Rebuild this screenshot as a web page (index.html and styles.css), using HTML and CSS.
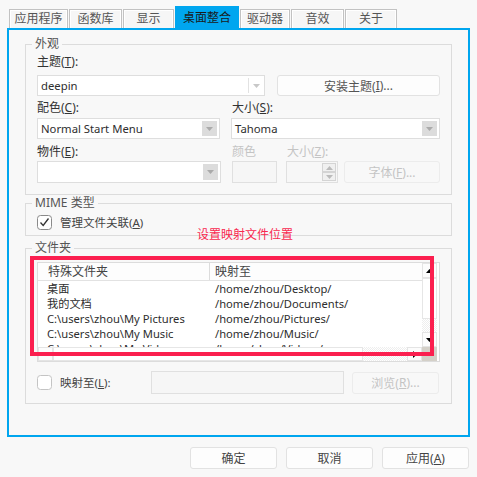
FILE: index.html
```
<!DOCTYPE html>
<html lang="zh">
<head>
<meta charset="utf-8">
<link rel="stylesheet" href="styles.css">
</head>
<body>
<div class="tabs">
  <div class="tab">应用程序</div>
  <div class="tab">函数库</div>
  <div class="tab">显示</div>
  <div class="tab active">桌面整合</div>
  <div class="tab">驱动器</div>
  <div class="tab">音效</div>
  <div class="tab">关于</div>
</div>
<div class="frame">
  <fieldset class="group g-look">
    <legend>外观</legend>
    <div class="lab l1">主题(<u>T</u>):</div>
    <div class="row r1">
      <div class="combo w-theme"><span class="val">deepin</span><span class="arrow plain"><svg width="7" height="4" viewBox="0 0 7 4"><polygon points="0,0 7,0 3.5,4" fill="#c8c8c8"/></svg></span></div>
      <div class="btn w-install">安装主题(<u>I</u>)...</div>
    </div>
    <div class="row labs l2">
      <div class="lab c-left">配色(<u>C</u>):</div>
      <div class="lab">大小(<u>S</u>):</div>
    </div>
    <div class="row r2">
      <div class="combo w-left"><span class="val">Normal Start Menu</span><span class="arrow box"><svg width="7" height="4" viewBox="0 0 7 4"><polygon points="0,0 7,0 3.5,4" fill="#aaa"/></svg></span></div>
      <div class="combo w-size ml11"><span class="val">Tahoma</span><span class="arrow box"><svg width="7" height="4" viewBox="0 0 7 4"><polygon points="0,0 7,0 3.5,4" fill="#aaa"/></svg></span></div>
    </div>
    <div class="row labs l3">
      <div class="lab c-left">物件(<u>E</u>):</div>
      <div class="lab dis c-color">颜色</div>
      <div class="lab dis">大小(<u>Z</u>):</div>
    </div>
    <div class="row r3">
      <div class="combo w-left tall"><span class="val"></span><span class="arrow box"><svg width="7" height="4" viewBox="0 0 7 4"><polygon points="0,0 7,0 3.5,4" fill="#aaa"/></svg></span></div>
      <div class="field w-color ml11"></div>
      <div class="spin ml9">
        <div class="spin-btns">
          <span class="sb"><svg width="7" height="4" viewBox="0 0 7 4"><polygon points="0,4 7,4 3.5,0" fill="#bbb"/></svg></span>
          <span class="sb"><svg width="7" height="4" viewBox="0 0 7 4"><polygon points="0,0 7,0 3.5,4" fill="#bbb"/></svg></span>
        </div>
      </div>
      <div class="btn dis w-font ml6">字体(<u>F</u>)...</div>
    </div>
  </fieldset>

  <fieldset class="group g-mime">
    <legend>MIME 类型</legend>
    <div class="row chk-row">
      <span class="chk"><svg width="15" height="15" viewBox="0 0 15 15"><rect x="0.5" y="0.5" width="14" height="14" rx="3" fill="#fff" stroke="#8a8a8a"/><polyline points="3.5,7.5 6.2,10.5 11.5,3.5" fill="none" stroke="#333" stroke-width="1.3"/></svg></span>
      <span class="chk-label">管理文件关联(<u>A</u>)</span>
    </div>
  </fieldset>

  <fieldset class="group g-folder">
    <legend>文件夹</legend>
    <div class="listwrap">
      <div class="list">
        <div class="lhead">
          <div class="hc c1">特殊文件夹</div>
          <div class="hc c2">映射至</div>
        </div>
        <div class="lbody">
          <div class="lrow"><span class="c1">桌面</span><span class="c2">/home/zhou/Desktop/</span></div>
          <div class="lrow"><span class="c1">我的文档</span><span class="c2">/home/zhou/Documents/</span></div>
          <div class="lrow"><span class="c1">C:\users\zhou\My Pictures</span><span class="c2">/home/zhou/Pictures/</span></div>
          <div class="lrow"><span class="c1">C:\users\zhou\My Music</span><span class="c2">/home/zhou/Music/</span></div>
          <div class="lrow"><span class="c1">C:\users\zhou\My Videos</span><span class="c2">/home/zhou/Videos/</span></div>
        </div>
        <div class="vscroll">
          <span class="sbtn"><svg width="7" height="4" viewBox="0 0 7 4"><polygon points="0,4 7,4 3.5,0" fill="#000"/></svg></span>
          <span class="vthumb"></span>
          <span class="vtrack"></span>
          <span class="sbtn"><svg width="7" height="4" viewBox="0 0 7 4"><polygon points="0,0 7,0 3.5,4" fill="#000"/></svg></span>
        </div>
        <div class="hscroll">
          <span class="sbtn h"><svg width="4" height="4" viewBox="0 0 4 4"><polygon points="0,4 4,4 4,0" fill="#000"/></svg></span>
          <span class="hthumb"></span>
          <span class="htrack"></span>
          <span class="sbtn h"><svg width="4" height="7" viewBox="0 0 4 7"><polygon points="0,0 4,3.5 0,7" fill="#000"/></svg></span>
        </div>
        <div class="corner"></div>
      </div>
      <div class="note-text">设置映射文件位置</div>
      <div class="note-box"></div>
    </div>
    <div class="row map-row">
      <div class="map-left">
        <span class="chk"><svg width="15" height="15" viewBox="0 0 15 15"><rect x="0.5" y="0.5" width="14" height="14" rx="3" fill="#fff" stroke="#c4c4c4"/></svg></span>
        <span class="chk-label">映射至(<u>L</u>):</span>
      </div>
      <div class="field w-map"></div>
      <div class="btn dis w-browse">浏览(<u>R</u>)...</div>
    </div>
  </fieldset>
</div>
<div class="actions">
  <div class="btn act">确定</div>
  <div class="btn act">取消</div>
  <div class="btn act">应用(<u>A</u>)</div>
</div>
</body>
</html>
```

FILE: styles.css
```
* { box-sizing: border-box; }
html, body { margin: 0; padding: 0; }
body {
  width: 477px;
  height: 477px;
  background: #f8f8f8;
  font-family: "Noto Sans", "Noto Sans CJK SC", sans-serif;
  font-size: 12px;
  color: #333;
  overflow: hidden;
}
u { text-decoration: underline; text-underline-offset: 1px; }

/* tabs */
.tabs {
  height: 28px;
  display: grid;
  grid-template-columns: 59px 53px 51px 64px 50px 53px 52px;
  column-gap: 1px;
  align-items: end;
  padding-left: 9px;
}
.tab {
  height: 19px;
  border: 1px solid #c2c2c2;
  border-bottom: none;
  box-shadow: inset 1px 1px 0 #fff, inset -1px 0 0 #fff;
  background: #f6f6f6;
  color: #555;
  text-align: center;
  line-height: 18px;
  font-size: 12px;
}
.tab.active {
  height: 22px;
  background: #00a6ef;
  border-color: #00a6ef;
  box-shadow: none;
  color: #1a1a1a;
  line-height: 22px;
}

/* main frame */
.frame {
  margin-left: 7px;
  width: 463px;
  height: 409px;
  border: 2px solid #00a6ef;
  padding: 7px 16px 0 16px;
}

.group {
  margin: 0;
  min-width: 0;
  border: 1px solid #dcdcdc;
  padding: 0 11px;
}
.group legend {
  padding: 0 3px;
  margin-left: -5px;
  line-height: 14px;
  height: 14px;
  color: #555;
  font-size: 12px;
}
.g-look { padding-bottom: 11px; }
.g-mime { margin-top: 1px; padding-bottom: 5px; }
.g-folder { margin-top: 5px; padding-bottom: 9px; }

.lab { line-height: 16px; height: 16px; white-space: nowrap; }
.lab.dis { color: #c4c4c4; }
.l1 { margin-top: 3px; }
.row { display: flex; align-items: stretch; }
.r1 { margin-top: 5px; height: 21px; }
.l2 { margin-top: 4px; }
.r2 { margin-top: 2px; height: 21px; }
.l3 { margin-top: 5px; }
.r3 { margin-top: 1px; height: 22px; }
.c-left { width: 195px; }
.c-color { width: 55px; }

.ml6 { margin-left: 6px; }
.ml9 { margin-left: 9px; }
.ml11 { margin-left: 11px; }

.combo {
  position: relative;
  display: flex;
  align-items: center;
  background: #fff;
  border: 1px solid #dedede;
}
.combo .val { flex: 1; padding-left: 3px; white-space: nowrap; color: #2e2e2e; font-size: 11.3px; }
.combo .arrow {
  display: flex;
  align-items: center;
  justify-content: center;
  width: 16px;
  align-self: stretch;
}
.combo .arrow.plain { border-left: 1px solid #e2e2e2; margin: 2px 0; }
.combo .arrow.box { background: #dcdcdc; margin: 2px 2px 2px 0; width: 15px; }
.w-theme { width: 228px; }
.w-install { width: 163px; margin-left: 12px; }
.w-left { width: 184px; }
.w-size { width: 210px; }
.w-color { width: 45px; }
.w-font { width: 96px; }

.field { background: #f6f6f6; border: 1px solid #e0e0e0; }

.spin {
  width: 52px;
  background: #f7f7f7;
  border: 1px solid #e0e0e0;
  display: flex;
  justify-content: flex-end;
  padding: 0 1px 0 0;
}
.spin-btns { display: flex; flex-direction: column; width: 14px; padding: 1px 0; gap: 0; }
.sb {
  flex: 1;
  display: flex;
  align-items: center;
  justify-content: center;
  border: 1px solid #d4d4d4;
  background: #f0f0f0;
}

.btn {
  display: flex;
  align-items: center;
  justify-content: center;
  background: #fdfdfd;
  border: 1px solid #e2e2e2;
  border-radius: 3px;
  color: #555;
  white-space: nowrap;
}
.btn.dis { color: #c4c4c4; background: #f8f8f8; border-color: #ececec; }

.chk-row { margin-top: 5px; height: 15px; align-items: center; }
.chk { display: block; width: 15px; height: 15px; }
.chk svg { display: block; }
.chk-label { margin-left: 8px; line-height: 15px; color: #444; font-size: 11.5px; }

/* list */
.listwrap { position: relative; margin-top: 7px; }
.list {
  width: 403px;
  height: 100px;
  border: 1px solid #dcdcdc;
  background: #fff;
  display: grid;
  grid-template-columns: 1fr 15px;
  grid-template-rows: 18px 66px 14px;
  padding-right: 2px;
}
.lhead {
  grid-column: 1; grid-row: 1;
  display: flex;
  border-bottom: 1px solid #e2e2e2;
  background: #fdfdfd;
}
.hc { line-height: 17px; color: #444; }
.lhead .c1 { width: 172px; padding-left: 10px; border-right: 1px solid #dcdcdc; }
.lhead .c2 { padding-left: 5px; }
.lbody { grid-column: 1; grid-row: 2; overflow: hidden; }
.lrow { display: flex; height: 15px; line-height: 15px; white-space: nowrap; color: #2e2e2e; font-size: 11.2px; }
.lrow .c1 { width: 172px; padding-left: 9px; }
.lrow .c2 { padding-left: 5px; }

.vscroll {
  grid-column: 2; grid-row: 1 / 3;
  display: flex; flex-direction: column;
}
.sbtn {
  display: flex; align-items: center; justify-content: center;
  height: 15px;
  border: 1px solid #e4e4e4;
  background: #fcfcfc;
}
.sbtn.h { width: 15px; height: auto; }
.vthumb { height: 41px; border: 1px solid #e6e6e6; background: #fff; }
.vtrack {
  flex: 1;
  background-image: repeating-conic-gradient(#eee 0 25%, #fff 0 50%);
  background-size: 2px 2px;
}
.hscroll { grid-column: 1; grid-row: 3; display: flex; }
.hthumb { width: 310px; border: 1px solid #e6e6e6; background: #fff; }
.htrack {
  flex: 1;
  background-image: repeating-conic-gradient(#eee 0 25%, #fff 0 50%);
  background-size: 2px 2px;
}
.corner { grid-column: 2; grid-row: 3; background: #d4d0c8; }

.note-box {
  position: absolute;
  left: -7px; top: -6px;
  width: 404px; height: 100px;
  border: 4px solid #fb1f4f;
  pointer-events: none;
}
.note-text {
  position: absolute;
  left: 160px; top: -34px;
  color: #f8284f;
  font-size: 12px;
  line-height: 14px;
  white-space: nowrap;
}

.map-row { margin-top: 9px; height: 23px; align-items: center; }
.map-left { width: 114px; display: flex; align-items: center; }
.w-map { width: 193px; height: 23px; }
.w-browse { width: 87px; height: 22px; margin-left: 8px; }

.actions {
  display: flex;
  justify-content: flex-end;
  gap: 9px;
  padding-right: 8px;
  margin-top: 10px;
}
.act { width: 87px; height: 22px; color: #444; }
```
